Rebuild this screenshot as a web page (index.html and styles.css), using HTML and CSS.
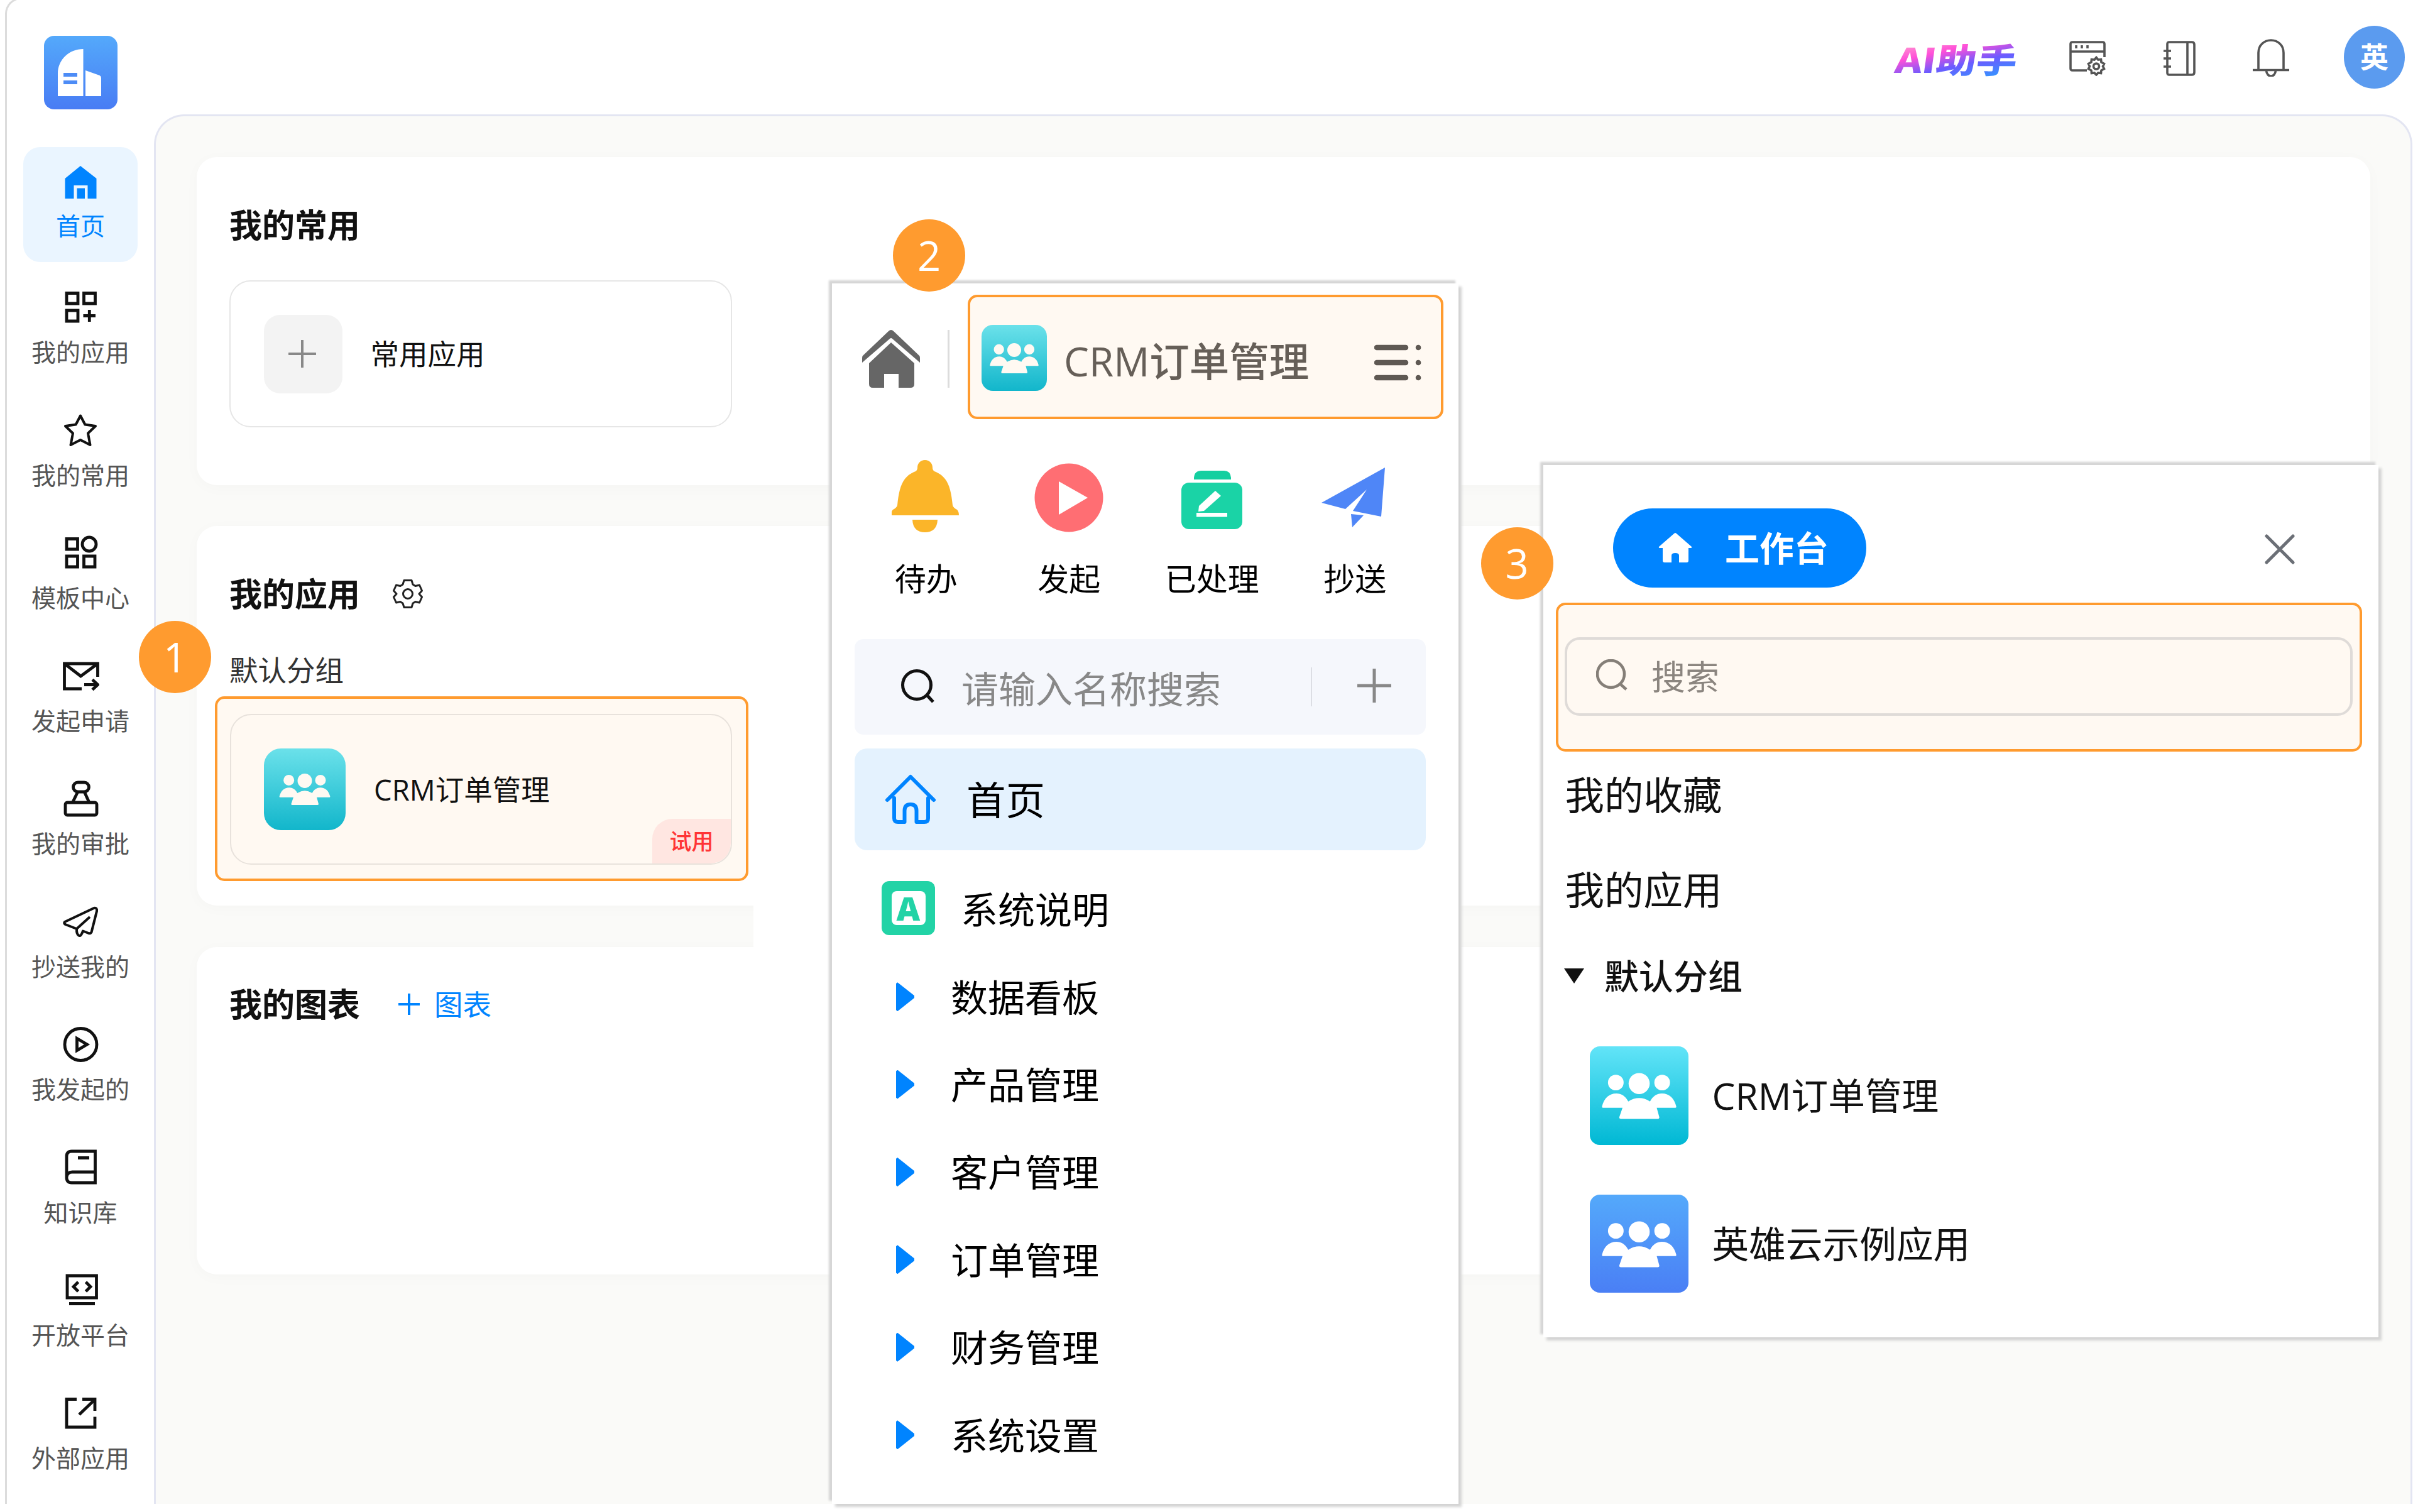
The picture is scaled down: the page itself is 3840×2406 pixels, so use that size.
FILE: index.html
```html
<!DOCTYPE html>
<html lang="zh-CN">
<head>
<meta charset="utf-8">
<title>工作台</title>
<link rel="stylesheet" href="styles.css">
</head>
<body>
<svg class="defs" width="0" height="0">
  <symbol id="people" viewBox="0 0 234 144">
    <circle cx="44" cy="30" r="24.5"/><circle cx="189" cy="30" r="24.5"/><circle cx="117" cy="33" r="33"/>
    <path d="M4 109Q0 109 1 104C7 80 22 64 46 64C61 64 74 72 83 89Q117 68 151 89C160 72 173 64 188 64C212 64 227 80 233 104Q234 109 230 109H172L180 138Q181 144 175 144H60Q54 144 55 138L65 109Z"/>
  </symbol>
</svg>
<div class="stage">
  <div class="app">
    <aside class="sidebar">
      <div class="logo">
        <svg viewBox="0 0 117 117"><path fill="#fff" d="M22 96V60C22 38 40 21 62.500 21V96ZM66 96V55L88.500 63Q91 64 91 67V96Z"/><path fill="#4d8cf6" d="M31 59H53V65H31ZM31 71H53V77H31Z"/></svg>
      </div>
      <nav class="nav">
        <a class="nav-item active"><svg class="ni" viewBox="0 0 60 60"><path fill="#0084ff" d="M30 4L55.500 24V56H41.500V35H19.500V56H5.500V24Z"/><path fill="#0084ff" d="M24.500 39.500H37V56H24.500Z"/></svg><span>首页</span></a>
        <a class="nav-item"><svg class="ni line" viewBox="0 0 60 60"><path d="M8 7.500H26V24H8ZM35.500 7.500H53.500V24H35.500ZM8 35H26V52H8ZM34.500 43.500H54M44.300 34V53"/></svg><span>我的应用</span></a>
        <a class="nav-item"><svg class="ni line thin" viewBox="0 0 60 60"><path d="M30 6.500L37.300 20.500L54 23L42 34.500L45.500 53L30 45L14.500 53L18 34.500L6 23L22.700 20.500Z"/></svg><span>我的常用</span></a>
        <a class="nav-item"><svg class="ni line" viewBox="0 0 60 60"><path d="M8 7.500H25.500V24H8ZM8 35H25.500V52H8ZM35.500 35H53V52H35.500Z"/><circle cx="44" cy="16" r="11"/></svg><span>模板中心</span></a>
        <a class="nav-item"><svg class="ni line" viewBox="0 0 60 60"><path d="M57.500 31V10H4.500V50H32M4.500 10L30.500 30L57.500 10M36 43.500H57M49 35.500L57.500 43.500L49 51.500"/></svg><span>发起申请</span></a>
        <a class="nav-item"><svg class="ni line" viewBox="0 0 60 60"><rect x="18.500" y="4" width="25" height="15" rx="7.500"/><path d="M25.500 19.500L17.500 36M36.500 19.500L44 36"/><rect x="6" y="36" width="50" height="20" rx="3"/></svg><span>我的审批</span></a>
        <a class="nav-item"><svg class="ni line thin" viewBox="0 0 60 60"><path d="M5 30L51.500 8Q57 7 56 13L47.500 46.500Q46 49 43 48L34 44.500Q31 53 28 52Q23.500 50 24 41L6 34Q3 32 5 30ZM24 41L45 22"/></svg><span>抄送我的</span></a>
        <a class="nav-item"><svg class="ni line" viewBox="0 0 60 60"><circle cx="30.500" cy="30" r="25.500"/><path d="M24.500 20.500V39.500L40.500 30Z"/></svg><span>我发起的</span></a>
        <a class="nav-item"><svg class="ni line" viewBox="0 0 60 60"><path d="M53.500 4V54H16Q8 54 8 46V12Q8 4 16 4ZM8 45Q9 37 17 37H53M26 14.500H44"/></svg><span>知识库</span></a>
        <a class="nav-item"><svg class="ni line" viewBox="0 0 60 60"><path d="M9 7H55.500V42H9ZM12 51.500H53M26.500 17L19 24.500L26.500 32M38.500 17L46 24.500L38.500 32"/></svg><span>开放平台</span></a>
        <a class="nav-item"><svg class="ni line" viewBox="0 0 60 60"><path d="M24 7.500H8V52H53V35.500M33 7.500H53V26M28 32L53 8"/></svg><span>外部应用</span></a>
      </nav>
    </aside>
    <div class="workspace">
      <header class="topbar">
        <span class="ai">AI助手</span>
        <svg class="t1" viewBox="0 0 58 56"><path d="M28 47H5Q2 47 2 44V5Q2 2 5 2H53Q56 2 56 5V26M2 17H56"/><path d="M11 7V12M20 7V12M29 7V12"/><path d="M43 26.500L46 30L50.500 29.500L51 34L55.500 36.500L53.500 40.500L55.500 44.500L51 47L50.500 51.500L46 51L43 54L40 51L35.500 51.500L35 47L30.500 44.500L32.500 40.500L30.500 36.500L35 34L35.500 29.500L40 30Z"/><circle cx="43" cy="40.500" r="4.500"/></svg>
        <svg class="t2" viewBox="0 0 52 56"><path d="M10 2H46Q50 2 50 6V50Q50 54 46 54H10Q7 54 7 51V5Q7 2 10 2ZM39 2V54M1 16H13M1 28H13M1 41H13"/></svg>
        <svg class="t3" viewBox="0 0 60 60"><path d="M1 49.500H59M10 49V22C10 10 19 2 30 2C41 2 50 10 50 22V49M22.500 50C23 62 37 62 37.500 50"/></svg>
        <span class="avatar">英</span>
      </header>
      <main class="main">
        <section class="card c1">
          <h2>我的常用</h2>
          <div class="tile">
            <span class="plus-box"><svg viewBox="0 0 44 44"><path d="M22 1V43M1 22H43"/></svg></span>
            <span>常用应用</span>
          </div>
        </section>
        <section class="card c2">
          <h2>我的应用<svg class="gear" viewBox="0 0 48 48"><path d="M18 2.500H30L32 9L36 11.500L42.500 10L46.500 19L42 24L46.500 29L42.500 38L36 36.500L32 39L30 45.500H18L16 39L12 36.500L5.500 38L1.500 29L6 24L1.500 19L5.500 10L12 11.500L16 9Z"/><circle cx="24" cy="24" r="7.500"/></svg></h2>
          <p class="group">默认分组</p>
          <div class="hl hl1">
            <div class="tile app-tile">
              <span class="ic cyan"><svg><use href="#people"/></svg></span>
              <span>CRM订单管理</span>
              <em class="trial">试用</em>
            </div>
          </div>
        </section>
        <section class="card c3">
          <h2>我的图表<a class="add"><svg viewBox="0 0 34 34"><path d="M17 0V34M0 17H34"/></svg>图表</a></h2>
        </section>
      </main>
    </div>
  </div>
  <div class="cover"></div>

  <div class="panel p2">
    <div class="p2-head">
      <svg class="home" viewBox="0 0 92 92"><path fill="#666" d="M46 0Q48 0 50 2L91 41Q92 42 92 45V52L48 14Q46 12 44 14L0 52V45Q0 42 1 41L42 2Q44 0 46 0Z"/><path fill="#666" d="M46 20L83 53V86Q83 92 77 92H58V70H35V92H17Q11 92 11 86V53Z"/></svg>
      <i class="bar"></i>
      <div class="hl hl2">
        <span class="ic cyan"><svg><use href="#people"/></svg></span>
        <span class="name">CRM订单管理</span>
        <svg class="list" viewBox="0 0 76 58"><path d="M4 5H50M4 29H50M4 53H50M70 5H70.100M70 29H70.100M70 53H70.100"/></svg>
      </div>
    </div>
    <div class="quick">
      <div><svg viewBox="2 -2 110 120"><path fill="#fbb529" d="M55 2C62 2 67 7 67 14Q67 18 70 20C91 28 96 45 99 74Q100 78 106 81Q109 84 109 90H1Q1 84 4 81Q10 78 11 74C14 45 19 28 40 20Q43 18 43 14C43 7 48 2 55 2ZM35 97H75Q74 117 55 117Q36 117 35 97Z"/></svg><span>待办</span></div>
      <div><svg viewBox="0 0 110 120"><circle cx="55" cy="64" r="54.500" fill="#ff6e73"/><path fill="#fff" d="M39 38L85 64L39 91Z"/></svg><span>发起</span></div>
      <div><svg viewBox="0 0 110 120"><path fill="#14cfa0" d="M26 35V32Q27 21 38 21H74Q84 21 85 32V35Z"/><rect x="6" y="40" width="97" height="74" rx="12" fill="#1ad3a6"/><path fill="#fff" d="M30 88H79V94.500H30ZM60 53L69 61L42 85L33 86L34 77Z"/></svg><span>已处理</span></div>
      <div><svg viewBox="0 0 110 120"><path fill="#4f86f7" d="M103 16L2 72L40 82L74 51L52 85L97 94ZM49 90L69 92L51 111Z"/></svg><span>抄送</span></div>
    </div>
    <div class="search">
      <svg class="mag" viewBox="0 0 54 54"><circle cx="25" cy="26" r="22.500"/><path d="M41 42L51 53"/></svg>
      <span>请输入名称搜索</span>
      <i></i>
      <svg class="plus" viewBox="0 0 54 54"><path d="M27 0V54M0 27H54"/></svg>
    </div>
    <div class="cur">
      <svg viewBox="0 0 80 80"><path d="M3 41L40 4L77 41M14 38V70Q14 76 20 76H30.500V58Q30.500 48 40 48Q49.500 48 49.500 58V76H62Q68 76 68 70V38"/></svg>
      <span>首页</span>
    </div>
    <div class="doc"><b><i>A</i></b><span>系统说明</span></div>
    <ul class="tree">
      <li><i></i>数据看板</li>
      <li><i></i>产品管理</li>
      <li><i></i>客户管理</li>
      <li><i></i>订单管理</li>
      <li><i></i>财务管理</li>
      <li><i></i>系统设置</li>
    </ul>
  </div>

  <div class="panel p3">
    <div class="p3-head">
      <a class="pill"><svg viewBox="0 0 54 48"><path fill="#fff" d="M27 0Q28 0 30 2L53 22Q54 24 51 24H48V44Q48 47 45 47H33V36Q33 32 27 32Q21 32 21 36V47H10Q7 47 7 44V24H3Q0 24 1 22L24 2Q26 0 27 0Z"/></svg>工作台</a>
      <svg class="close" viewBox="0 0 48 48"><path d="M3 3L45 45M45 3L3 45"/></svg>
    </div>
    <div class="hl hl3">
      <div class="input"><svg viewBox="0 0 50 50"><circle cx="23.500" cy="23.500" r="21.500"/><path d="M39 40L48 48"/></svg>搜索</div>
    </div>
    <p class="sec s1">我的收藏</p>
    <p class="sec s2">我的应用</p>
    <p class="fold"><i></i>默认分组</p>
    <div class="row"><span class="ic cyan2"><svg><use href="#people"/></svg></span><span>CRM订单管理</span></div>
    <div class="row"><span class="ic blue"><svg><use href="#people"/></svg></span><span>英雄云示例应用</span></div>
  </div>

  <span class="step b1">1</span>
  <span class="step b2">2</span>
  <span class="step b3">3</span>
</div>
</body>
</html>
```
FILE: styles.css
```css
* { box-sizing: border-box; margin: 0; padding: 0; }
body {
  width: 3840px; height: 2406px; overflow: hidden; background: #fff;
  font-family: "Open Sans", "Noto Sans CJK SC", sans-serif; color: #111;
}
i, em { font-style: normal; }
svg { display: block; flex: none; fill: none; }
.defs { position: absolute; }
.stage { position: relative; width: 3840px; height: 2406px; overflow: hidden; }

.app {
  display: flex; width: 3831px; height: 2397px; margin: -4px 0 0 8px;
  border: solid #dcdcdc; border-width: 3px 0 0 3px; border-top-left-radius: 26px;
}
.sidebar { width: 234px; flex: none; padding: 58px 0 0 26px; }
.logo {
  width: 117px; height: 117px; margin-left: 33px; border-radius: 16px;
  background: linear-gradient(#54a9fb, #487cf4);
}
.nav { display: flex; flex-direction: column; gap: 13.06px; margin-top: 60px; }
.nav-item {
  display: flex; flex-direction: column; align-items: center; width: 182px; height: 182.5px;
  padding-top: 26px; border-radius: 27px; font-size: 39px; line-height: 48px; color: #555;
}
.nav-item.active { background: #eaf5ff; color: #0084ff; margin-bottom: 3.5px; }
.ni { width: 60px; height: 60px; margin-bottom: 17px; }
.active .ni { margin-bottom: 15px; }
.line { stroke: #111; stroke-width: 4.8; }
.line.thin { stroke-width: 4; stroke-linejoin: round; }

.workspace { flex: 1; display: flex; flex-direction: column; }
.topbar { display: flex; height: 183px; padding-top: 42px; padding-left: 2765px; }
.topbar svg { stroke: #555; stroke-width: 3.6; }
.ai {
  width: 212px; height: 64px; margin-top: 20px; padding-left: 6px; font: 900 54px/64px "Noto Sans CJK SC", sans-serif; white-space: nowrap;
  background: linear-gradient(165deg, #ff8fd0 14%, #ff4fd8 32%, #6b5bff 56%, #2f9bff 85%);
  -webkit-background-clip: text; background-clip: text; color: transparent;
  transform: skewX(-8deg) scaleX(1.19); transform-origin: 0 50%;
}
.t1 { width: 58px; height: 56px; margin: 24px 0 0 71px; }
.t2 { width: 52px; height: 56px; margin: 24px 0 0 91px; }
.t3 { width: 60px; height: 60px; margin: 21px 0 0 90px; }
.avatar {
  width: 97px; height: 100px; margin-left: 86px; border-radius: 50%; background: #5b9bef; color: #fff;
  font-size: 45px; font-weight: 700; line-height: 100px; text-align: center;
}
.main {
  flex: 1; padding: 65px 64px 0 65px; background: #fafaf8;
  border: solid #e3e5f2; border-width: 3px 3px 0; border-radius: 48px 48px 0 0;
}
.card {
  padding: 78px 0 0 52px; background: #fff; border-radius: 32px;
  box-shadow: 0 4px 24px rgba(0, 0, 0, .025);
}
.c1 { height: 521.5px; margin-bottom: 65px; }
.c2 { height: 604.5px; margin-bottom: 66px; }
.c3 { height: 521px; padding-top: 61px; }
h2 { display: flex; align-items: center; height: 60px; font-size: 52px; line-height: 60px; font-weight: 700; }
.tile {
  position: relative; display: flex; align-items: center; width: 799.5px; height: 234px; margin-top: 58px;
  padding-left: 52.5px; gap: 45px; border: 2px solid #e6e6e6; border-radius: 34px; font-size: 45.5px; line-height: 60px; overflow: hidden;
}
.plus-box {
  display: flex; align-items: center; justify-content: center; width: 125px; height: 125px; padding-right: 3px;
  background: #f3f3f3; border-radius: 26px;
}
.plus-box svg { width: 44px; height: 44px; stroke: #888; stroke-width: 4; stroke-linecap: round; }
.gear { width: 48px; height: 48px; margin-left: 52px; stroke: #222; stroke-width: 3; stroke-linejoin: round; }
.group { margin-top: 66px; font-size: 45.5px; line-height: 50px; color: #333; }
.hl { border: 4px solid #ff9b2f; border-radius: 15px; background: #fff9f2; }
.hl1 { width: 849px; height: 294px; margin: 17px 0 0 -23.5px; padding: 24.5px 0 0 20px; }
.app-tile { height: 239.5px; margin: 0; gap: 45px; border-color: #e8e2dc; }
.ic { display: flex; align-items: center; justify-content: center; flex: none; }
.ic svg { fill: #fff9f2; width: 82px; height: 50px; }
.cyan { width: 130px; height: 130px; border-radius: 27px; background: linear-gradient(#6be1ea, #12b6cb); }
.trial {
  position: absolute; right: 0; bottom: 0; width: 125px; height: 71px; border-radius: 32px 0 32px 0;
  background: #ffe6e1; color: #ff3535; font-size: 35px; font-weight: 500; line-height: 71px; text-align: center;
}
.add { display: flex; align-items: center; gap: 23px; margin-left: 61px; font-size: 45.5px; font-weight: 400; color: #0084ff; }
.add svg { width: 34px; height: 34px; stroke: #0084ff; stroke-width: 4; }
.cover { position: absolute; left: 1199px; top: 1420px; width: 126px; height: 110px; background: #fff; }

.panel { position: absolute; background: #fff; box-shadow: -5px -5px 3px #d6d6d6, 5px 5px 4px #d3d3d3; }
.p2 { left: 1324px; top: 451px; width: 996.500px; height: 1942px; padding-left: 36px; }
.p2-head { display: flex; padding: 17.500px 0 0 12px; }
.home { width: 92px; height: 92px; margin-top: 56px; }
.bar { width: 3px; height: 92px; margin: 56px 29.500px 0 43.500px; background: #dcdcdc; }
.hl2 { display: flex; align-items: center; width: 757px; height: 198.500px; padding-left: 18px; }
.hl2 .cyan { width: 104px; height: 105px; border-radius: 18px; margin-top: 4px; }
.hl2 .ic svg { width: 78px; height: 48px; }
.name { width: 494px; margin: 14px 0 0 27px; font-size: 63.500px; line-height: 80px; font-weight: 500; color: #665f58; }
.list { width: 76px; height: 58px; margin-top: 19px; stroke: #5f5953; stroke-width: 8.500; stroke-linecap: round; }
.quick { display: grid; grid-template-columns: repeat(4, 227.500px); margin-top: 61px; }
.quick div { display: flex; flex-direction: column; align-items: center; }
.quick svg { width: 110px; height: 120px; }
.quick span { margin-top: 42.500px; font-size: 50px; line-height: 60px; color: #000; }
.search {
  display: flex; align-items: center; width: 908.500px; height: 152px; margin-top: 66.500px; padding-left: 74px;
  border-radius: 14px; background: #f5f7fc; font-size: 59px; line-height: 80px; color: #888;
}
.search .mag { width: 54px; height: 54px; stroke: #111; stroke-width: 5; margin-top: -4px; }
.search span { width: 556px; margin: 5px 0 0 42px; }
.search i { width: 2px; height: 62px; background: #dcdee4; }
.search .plus { width: 54px; height: 54px; margin: -4px 0 0 72px; stroke: #888; stroke-width: 5; }
.cur {
  display: flex; align-items: center; width: 908.500px; height: 161.500px; margin-top: 22px; padding-left: 49px;
  border-radius: 20px; background: #e4f2fe; font-size: 62.500px; line-height: 80px; color: #000;
}
.cur svg { width: 80px; height: 80px; margin-right: 49px; stroke: #0084ff; stroke-width: 6; stroke-linecap: round; stroke-linejoin: round; }
.cur span { padding-top: 3px; }
.doc { display: flex; height: 86px; margin: 49.500px 0 0 43px; font-size: 59px; line-height: 86px; color: #000; }
.doc b { display: flex; align-items: center; justify-content: center; width: 85px; height: 86px; border-radius: 12px; background: #22d3a6; }
.doc i { width: 54px; height: 54px; border-radius: 8px; background: #fff; color: #22d3a6; font: 800 52px/54px "Open Sans", sans-serif; text-align: center; }
.doc span { margin: 2px 0 0 41px; }
.tree { list-style: none; margin: 29px 0 0 66px; }
.tree li { display: flex; align-items: center; height: 139.400px; font-size: 59px; line-height: 80px; color: #000; }
.tree i { width: 29px; height: 46px; margin: -1px 58px 0 0; background: #0084ff; clip-path: polygon(0 4%, 8% 0, 100% 46%, 100% 54%, 8% 100%, 0 96%); }

.p3 { left: 2456px; top: 740px; width: 1329px; height: 1387.500px; padding-left: 20px; }
.p3-head { display: flex; padding: 69px 0 0 91px; }
.pill {
  display: flex; align-items: center; width: 402.500px; height: 126px; padding-left: 72px; gap: 52px;
  border-radius: 63px; background: #0084ff; color: #fff; font-size: 55px; line-height: 80px; font-weight: 700;
}
.pill svg { width: 54px; height: 48px; }
.close { width: 48px; height: 48px; margin: 41px 0 0 634px; stroke: #6b6f76; stroke-width: 5; stroke-linecap: round; }
.hl3 { width: 1283px; height: 237px; margin-top: 24px; padding: 50.500px 0 0 10px; }
.input {
  display: flex; align-items: center; gap: 38px; width: 1254px; height: 125.500px; padding: 2px 0 0 46px;
  border: 4px solid #dfdbd8; border-radius: 24px; font-size: 54px; line-height: 80px; color: #8b857f;
}
.input svg { width: 50px; height: 50px; stroke: #857f78; stroke-width: 4.500; margin-top: -6px; }
.sec { margin-left: 14.500px; font-size: 62.500px; line-height: 80px; }
.s1 { margin-top: 29px; }
.s2 { margin-top: 71px; }
.fold { display: flex; align-items: center; margin: 57px 0 0 13px; font-size: 55px; line-height: 80px; font-weight: 500; }
.fold i { width: 32px; height: 24px; margin-right: 32px; background: #111; clip-path: polygon(0 0, 100% 0, 50% 100%); }
.row { display: flex; align-items: center; gap: 38px; height: 156.500px; margin: 0 0 79px 54px; font-size: 58.700px; line-height: 80px; }
.fold + .row { margin-top: 72px; }
.row .ic { width: 156.500px; height: 156.500px; border-radius: 16px; }
.row .ic svg { width: 119px; height: 74px; fill: #fff; margin-bottom: -2px; }
.cyan2 { background: linear-gradient(#62e4f8, #00b8d4); }
.blue { background: linear-gradient(#54a9fb, #4a7ff5); }

.step {
  position: absolute; width: 115px; height: 115px; border-radius: 50%; background: #ff9b2f; color: #fff;
  font-size: 65px; line-height: 115px; text-align: center;
}
.b1 { left: 221px; top: 987.500px; }
.b2 { left: 1421px; top: 349px; }
.b3 { left: 2356.500px; top: 839px; }
```
